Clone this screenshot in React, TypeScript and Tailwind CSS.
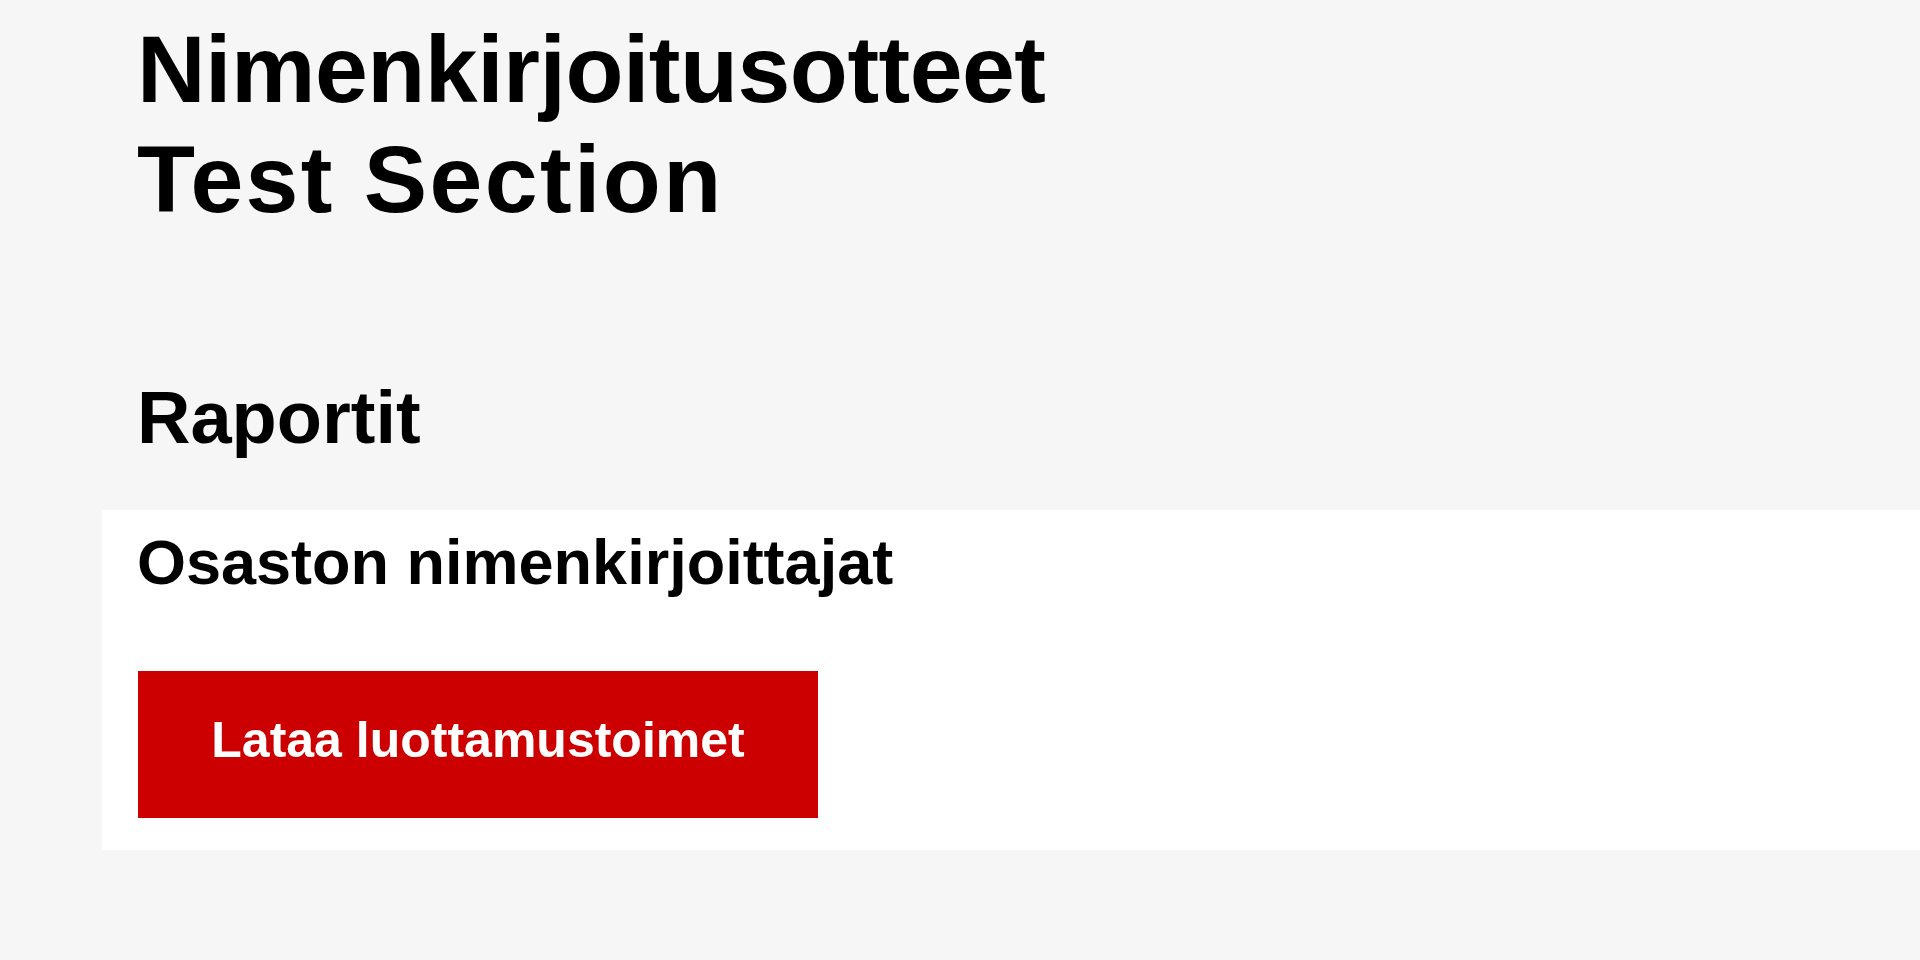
export default function App() {
  return (
    <div
      className="min-h-screen bg-[#f6f6f6] text-black"
      style={{ fontFamily: '"Liberation Sans", Arial, Helvetica, sans-serif' }}
    >
      <div className="pl-[137px] pt-[14px]">
        <h1 className="text-[95px] leading-[110px] font-bold">
          <span className="tracking-[-0.5px]">Nimenkirjoitusotteet</span>
          <br />
          <span className="tracking-[2.4px]">Test Section</span>
        </h1>
        <h2 className="mt-[141px] text-[74px] leading-[85px] font-bold">Raportit</h2>
      </div>
      <div className="ml-[102px] mt-[50px] bg-white pl-[35px] pt-[16px] pb-[32px]">
        <h3 className="text-[63px] leading-[72px] font-bold">Osaston nimenkirjoittajat</h3>
        <button className="ml-[1px] mt-[73px] flex h-[147px] w-[680px] items-center justify-center bg-[#cc0000] pb-[8px] text-[50px] font-bold text-white">
          Lataa luottamustoimet
        </button>
      </div>
    </div>
  );
}
